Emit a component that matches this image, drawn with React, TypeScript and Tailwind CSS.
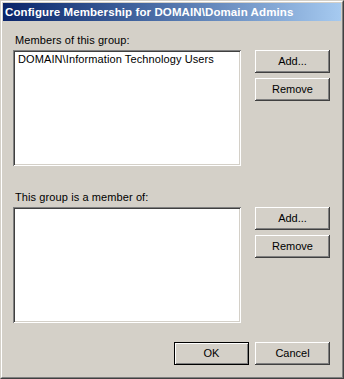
import React from "react";

const font = { fontFamily: '"Liberation Sans", Arial, sans-serif' };

function Btn({ label, def = false }: { label: string; def?: boolean }) {
  if (def) {
    return (
      <div className="w-[75px] h-[23px] border border-black bg-[#d4d0c8] shadow-[inset_1px_1px_0_#ffffff,inset_-1px_-1px_0_#808080] flex items-center justify-center text-[11px] leading-[13px] text-black">
        {label}
      </div>
    );
  }
  return (
    <div className="w-[75px] h-[23px] bg-[#d4d0c8] shadow-[inset_-1px_-1px_0_#404040,inset_1px_1px_0_#ffffff,inset_-2px_-2px_0_#808080] flex items-center justify-center text-[11px] leading-[13px] text-black">
      {label}
    </div>
  );
}

function ListBox({ items }: { items: string[] }) {
  return (
    <div className="w-[228px] h-[116px] bg-white shadow-[inset_1px_1px_0_#808080,inset_-1px_-1px_0_#ffffff,inset_2px_2px_0_#404040,inset_-2px_-2px_0_#d4d0c8] pt-[3px] pl-[5px]">
      {items.map((t) => (
        <div key={t} className="text-[11px] leading-[13px] text-black whitespace-nowrap tracking-[0.1px]">
          {t}
        </div>
      ))}
    </div>
  );
}

export default function App() {
  return (
    <div style={font} className="w-[344px] h-[379px] border border-t-[#d4d0c8] border-l-[#d4d0c8] border-r-[#404040] border-b-[#404040]">
      <div className="w-full h-full border border-t-white border-l-white border-r-[#808080] border-b-[#808080] bg-[#d4d0c8] p-px flex flex-col">
        <div className="h-[18px] bg-gradient-to-r from-[#0a246a] to-[#a6caf0] flex items-center pl-[2px]">
          <span className="text-white font-bold text-[11.5px] tracking-[0.1px] leading-[13px] whitespace-nowrap">
            Configure Membership for DOMAIN\Domain Admins
          </span>
        </div>
        <div className="flex flex-col pl-[10px] pr-[11px] pt-[12px]">
          <div className="h-[17px] pl-[2px] text-[11px] leading-[13px] pt-[1px] text-black tracking-[0.1px]">Members of this group:</div>
          <div className="flex gap-[14px]">
            <ListBox items={["DOMAIN\\Information Technology Users"]} />
            <div className="flex flex-col gap-[5px]">
              <Btn label="Add..." />
              <Btn label="Remove" />
            </div>
          </div>
          <div className="mt-[24px] h-[17px] pl-[2px] text-[11px] leading-[13px] pt-[1px] text-black tracking-[0.1px]">This group is a member of:</div>
          <div className="flex gap-[14px]">
            <ListBox items={[]} />
            <div className="flex flex-col gap-[5px]">
              <Btn label="Add..." />
              <Btn label="Remove" />
            </div>
          </div>
          <div className="mt-[19px] flex justify-end gap-[6px]">
            <Btn label="OK" def />
            <Btn label="Cancel" />
          </div>
        </div>
      </div>
    </div>
  );
}
